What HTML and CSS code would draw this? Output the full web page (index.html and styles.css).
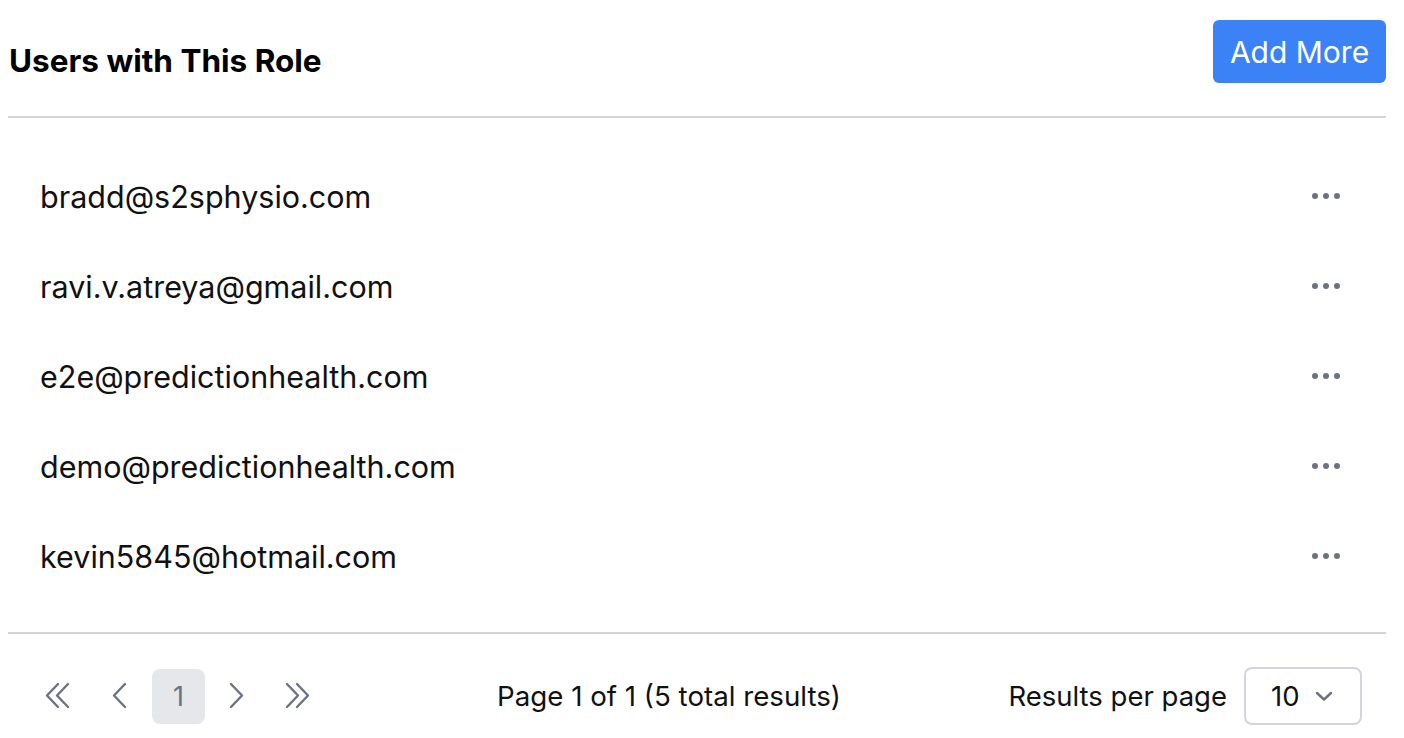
FILE: index.html
```html
<!DOCTYPE html>
<html>
<head>
<meta charset="utf-8">
<link rel="stylesheet" href="styles.css">
</head>
<body>
<div class="panel">
  <div class="header">
    <h2 class="title">Users with This Role</h2>
    <button class="btn-primary">Add More</button>
  </div>
  <ul class="list">
    <li class="row"><span class="email">bradd@s2sphysio.com</span><span class="dots"><i></i><i></i><i></i></span></li>
    <li class="row"><span class="email">ravi.v.atreya@gmail.com</span><span class="dots"><i></i><i></i><i></i></span></li>
    <li class="row"><span class="email">e2e@predictionhealth.com</span><span class="dots"><i></i><i></i><i></i></span></li>
    <li class="row"><span class="email">demo@predictionhealth.com</span><span class="dots"><i></i><i></i><i></i></span></li>
    <li class="row"><span class="email">kevin5845@hotmail.com</span><span class="dots"><i></i><i></i><i></i></span></li>
  </ul>
  <div class="footer">
    <div class="pager">
      <span class="pg-icon pg-first">
        <svg width="30" height="30" viewBox="0 0 30 30" fill="none" stroke="#6b7280" stroke-width="2.4" stroke-linecap="round" stroke-linejoin="round"><path d="M14 3 L3 14.5 L14 26"/><path d="M24 3 L13 14.5 L24 26"/></svg>
      </span>
      <span class="pg-icon pg-prev">
        <svg width="22" height="30" viewBox="0 0 22 30" fill="none" stroke="#6b7280" stroke-width="2.4" stroke-linecap="round" stroke-linejoin="round"><path d="M17 3 L6 14.5 L17 26"/></svg>
      </span>
      <span class="pg-page">1</span>
      <span class="pg-icon pg-next">
        <svg width="22" height="30" viewBox="0 0 22 30" fill="none" stroke="#6b7280" stroke-width="2.4" stroke-linecap="round" stroke-linejoin="round"><path d="M5 3 L16 14.5 L5 26"/></svg>
      </span>
      <span class="pg-icon pg-last">
        <svg width="30" height="30" viewBox="0 0 30 30" fill="none" stroke="#6b7280" stroke-width="2.4" stroke-linecap="round" stroke-linejoin="round"><path d="M6 3 L17 14.5 L6 26"/><path d="M16 3 L27 14.5 L16 26"/></svg>
      </span>
    </div>
    <div class="summary">Page 1 of 1 (5 total results)</div>
    <div class="perpage">
      <span class="perpage-label">Results per page</span>
      <span class="select">
        <span class="select-value">10</span>
        <svg width="20" height="12" viewBox="0 0 20 12" fill="none" stroke="#6b7280" stroke-width="2.4" stroke-linecap="round" stroke-linejoin="round"><path d="M3 3 L10 9.5 L17 3"/></svg>
      </span>
    </div>
  </div>
</div>
</body>
</html>
```
FILE: styles.css
```css
* { box-sizing: border-box; }
html, body { margin: 0; padding: 0; background: #ffffff; }
body {
  font-family: Inter, "Noto Sans", "Liberation Sans", sans-serif;
  color: #111111;
}
.panel {
  width: 1378px;
  margin-left: 8px;
}
.header {
  display: flex;
  justify-content: space-between;
  align-items: flex-start;
  height: 118px;
  padding-top: 20px;
  border-bottom: 2px solid #d4d5da;
}
.title {
  margin: 25px 0 0 1px;
  font-size: 31.5px;
  font-weight: 700;
  line-height: 1;
  color: #000;
}
.btn-primary {
  border: none;
  background: #3b82f6;
  color: #fff;
  font-family: inherit;
  font-size: 30px;
  font-weight: 400;
  height: 63px;
  width: 173px;
  border-radius: 6px;
  padding: 0;
}
.list {
  list-style: none;
  margin: 0;
  padding: 33px 0 31px;
  border-bottom: 2px solid #d4d5da;
}
.row {
  display: flex;
  justify-content: space-between;
  align-items: center;
  height: 90px;
  padding: 0 46px 0 32px;
}
.email {
  font-size: 30.5px;
  color: #111;
}
.dots { display: flex; gap: 5px; }
.dots i {
  display: block;
  width: 6px;
  height: 6px;
  border-radius: 50%;
  background: #6b7280;
}
.footer {
  display: flex;
  align-items: center;
  height: 124px;
  padding: 0 24px 0 36px;
}
.pager { display: flex; align-items: center; }
.pg-icon { display: flex; align-items: center; }
.pg-first { margin-right: 34px; }
.pg-prev { margin-right: 22px; }
.pg-next { margin-left: 21px; margin-right: 33px; }
.pg-page {
  width: 53px;
  height: 55px;
  border-radius: 8px;
  background: #e5e7eb;
  color: #6b7280;
  font-size: 27px;
  display: flex;
  align-items: center;
  justify-content: center;
}
.summary {
  font-size: 27.7px;
  color: #111;
  margin-left: 186px;
}
.perpage { display: flex; align-items: center; gap: 17px; margin-left: auto; }
.perpage-label { font-size: 27.5px; color: #111; }
.select {
  width: 118px;
  height: 58px;
  border: 2px solid #d4d5da;
  border-radius: 8px;
  display: flex;
  align-items: center;
  padding-left: 25px;
  gap: 14px;
}
.select-value { font-size: 27.5px; color: #111; }
```
